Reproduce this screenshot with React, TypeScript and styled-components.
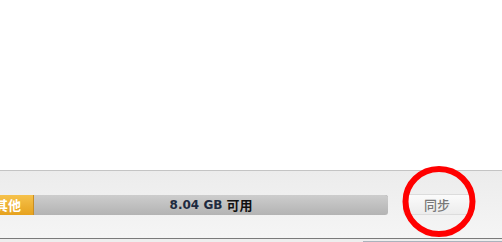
import * as React from "react"
import styled, { createGlobalStyle } from "styled-components"

const GlobalStyle = createGlobalStyle`
  html, body {
    margin: 0;
    padding: 0;
    background: #ffffff;
  }
  body {
    width: 502px;
    height: 242px;
    overflow: hidden;
    font-family: "DejaVu Sans", "Noto Sans CJK SC", sans-serif;
  }
`

const Page = styled.div`
  position: relative;
  display: flex;
  flex-direction: column;
  width: 502px;
  height: 242px;
  overflow: hidden;
`

const Content = styled.div`
  height: 170px;
  background: #ffffff;
`

const Toolbar = styled.div`
  display: flex;
  align-items: center;
  height: 67px;
  border-top: 1px solid #c4c4c4;
  border-bottom: 1px solid #7a7a7a;
  background: linear-gradient(#ececec, #f5f5f5);
`

const CapacityBar = styled.div`
  display: flex;
  width: 405px;
  height: 20px;
  margin-left: -17px;
  border-radius: 3px;
  overflow: hidden;
  box-shadow: inset 0 1px 0 #8e8e8e;
`

const Segment = styled.div<{ $kind: "other" | "free" }>`
  display: flex;
  align-items: center;
  justify-content: center;
  font-size: 12px;
  font-weight: bold;
  ${({ $kind }) =>
    $kind === "other"
      ? `
    width: 50px;
    font-size: 13px;
    color: #ffffff;
    background: linear-gradient(#f6c24c, #e6a21e);
    border-right: 1px solid #c98e24;
  `
      : `
    flex: 1;
    color: #1e2a40;
    background: linear-gradient(#cdcdcd, #b3b3b3);
  `}
`

const Unit = styled.span`
  margin-left: 4px;
  font-size: 13px;
  color: #111111;
`

const SyncButton = styled.button`
  width: 68px;
  height: 21px;
  margin-left: 15px;
  padding: 0;
  border: 1px solid #dcdcdc;
  border-radius: 3px;
  background: linear-gradient(#fbfbfb, #ececec);
  color: #787878;
  font-family: "Noto Sans CJK SC", sans-serif;
  font-size: 13px;
  font-weight: 500;
`

const Strip = styled.div`
  display: flex;
  height: 3px;
  background: #eeeeee;
`

const StripTab = styled.div`
  flex: 1;
  margin-left: 363px;
  margin-top: 2px;
  background: #aab3bd;
`

const Marker = styled.svg`
  position: absolute;
  left: 400px;
  top: 163px;
  pointer-events: none;
`

export default function App() {
  return (
    <>
      <GlobalStyle />
      <Page>
        <Content />
        <Toolbar>
          <CapacityBar>
            <Segment $kind="other">其他</Segment>
            <Segment $kind="free">
              8.04 GB<Unit>可用</Unit>
            </Segment>
          </CapacityBar>
          <SyncButton>同步</SyncButton>
        </Toolbar>
        <Strip>
          <StripTab />
        </Strip>
        <Marker width="80" height="78" viewBox="0 0 80 78">
          <ellipse cx="39" cy="38.5" rx="33.5" ry="32.5" fill="none" stroke="#ff0000" strokeWidth="6" />
        </Marker>
      </Page>
    </>
  )
}
